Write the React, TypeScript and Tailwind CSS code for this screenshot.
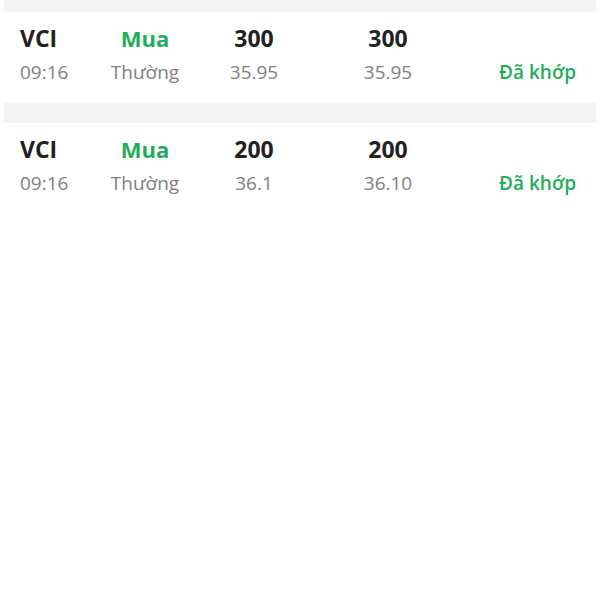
const orders = [
  { code: "VCI", side: "Mua", qty: "300", matched: "300", time: "09:16", type: "Thường", price: "35.95", matchPrice: "35.95", status: "Đã khớp" },
  { code: "VCI", side: "Mua", qty: "200", matched: "200", time: "09:16", type: "Thường", price: "36.1", matchPrice: "36.10", status: "Đã khớp" },
];

const cols = "grid grid-cols-[80px_90px_128px_140px_1fr] items-center";

export default function App() {
  return (
    <div className="min-h-[600px] bg-white px-1 font-['Open_Sans',sans-serif]">
      <div className="bg-[#f4f4f4] pt-3">
        {orders.map((o, i) => (
          <div key={i} className="mb-5 bg-white pl-4 pr-5 pt-[9px] pb-[13px]">
            <div className={`${cols} h-[33px] text-[23px] font-bold text-[#222]`}>
              <span>{o.code}</span>
              <span className="text-center text-[22px] text-[#1fad5b]">{o.side}</span>
              <span className="text-center">{o.qty}</span>
              <span className="text-center">{o.matched}</span>
              <span />
            </div>
            <div className={`${cols} h-[36px] text-[19px] text-[#808080]`}>
              <span>{o.time}</span>
              <span className="text-center">{o.type}</span>
              <span className="text-center">{o.price}</span>
              <span className="text-center">{o.matchPrice}</span>
              <span className="text-right font-semibold text-[#1fad5b]">{o.status}</span>
            </div>
          </div>
        ))}
      </div>
    </div>
  );
}
